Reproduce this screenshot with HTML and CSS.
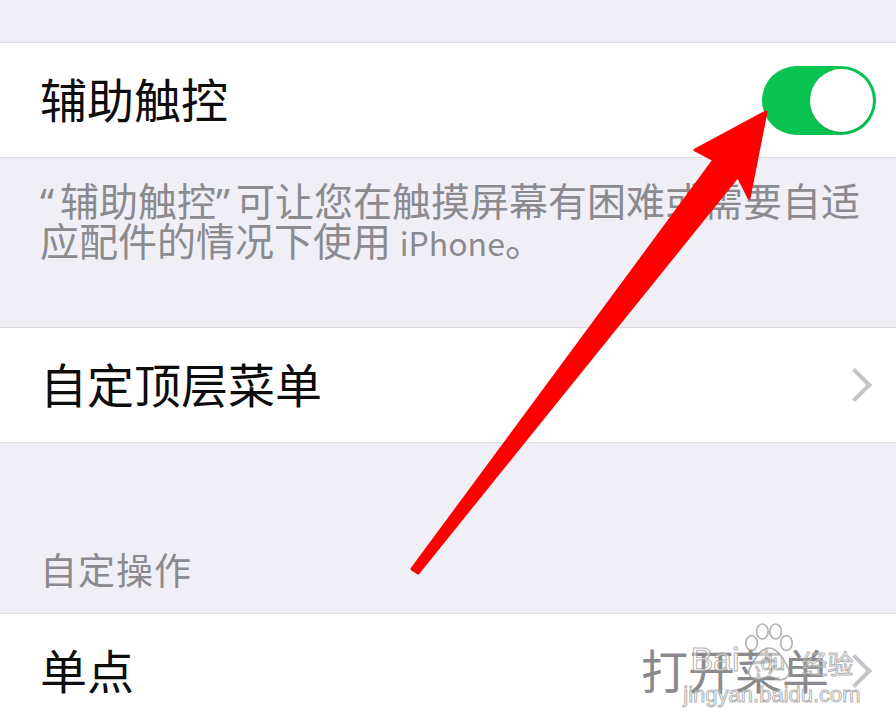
FILE: index.html
```html
<!DOCTYPE html>
<html lang="zh-CN">
<head>
  <meta charset="UTF-8">
  <title>辅助触控</title>
  <link rel="stylesheet" href="styles.css">
</head>
<body>

  <div class="screen">
    <div class="top-gap"></div>

    <div class="group">
      <div class="cell">
        <span class="label">辅助触控</span>
        <span class="switch on"><span class="knob"></span></span>
      </div>
    </div>

    <p class="footer"><span class="q">“</span>辅助触控<span class="q">”</span>可让您在触摸屏幕有困难或需要自适<br>应配件的情况下使用 <span class="latin">iPhone</span>。</p>

    <div class="group">
      <div class="cell">
        <span class="label">自定顶层菜单</span>
        <span class="chevron"></span>
      </div>
    </div>

    <p class="header">自定操作</p>

    <div class="group">
      <div class="cell">
        <span class="label">单点</span>
        <span class="value">打开菜单</span>
        <span class="chevron"></span>
      </div>
    </div>

    <!-- red annotation arrow drawn over the page -->
    <svg class="arrow" width="896" height="724" viewBox="0 0 896 724">
      <polygon points="766,112 749,198 738,176 418,573 412,569 714,160 695,150"
               fill="#ff0000" stroke="#ff0000" stroke-width="3" stroke-linejoin="round"/>
    </svg>

    <!-- watermark -->
    <div class="watermark">
      <div class="wm-logo">
        <span class="wm-bai">Bai</span>
        <svg class="wm-paw" width="70" height="72" viewBox="0 0 70 72">
          <ellipse cx="14" cy="24" rx="7" ry="9" />
          <ellipse cx="27" cy="10" rx="7" ry="9" />
          <ellipse cx="43" cy="10" rx="7" ry="9" />
          <ellipse cx="56" cy="24" rx="7" ry="9" />
          <path d="M35 30 C24 30 16 46 12 54 C8 62 14 70 24 68 C30 67 32 64 35 64 C38 64 40 67 46 68 C56 70 62 62 58 54 C54 46 46 30 35 30 Z" />
        </svg>
        <span class="wm-du">du</span>
        <span class="wm-jy">经验</span>
      </div>
      <div class="wm-url">jingyan.baidu.com</div>
    </div>
  </div>

</body>
</html>
```

FILE: styles.css
```css
body {
  margin: 0;
  background-color: #f0eff5;
  font-family: "Noto Sans CJK SC", "Noto Sans", sans-serif;
}

.screen {
  position: relative;
  width: 896px;
  height: 724px;
  overflow: hidden;
}

.top-gap {
  height: 42px;
}

.group {
  background-color: #ffffff;
  border-top: 1px solid #dcdce0;
  border-bottom: 1px solid #dcdce0;
}

.cell {
  display: flex;
  align-items: center;
  height: 114px;
  padding: 0 20px 0 40px;
}

.label {
  flex: 1;
  font-size: 47px;
  color: #0d0d0d;
  line-height: 1;
  padding-bottom: 5px;
}

.value {
  font-size: 47px;
  color: #8a8a8e;
  line-height: 1;
  padding-bottom: 5px;
  margin-right: 14px;
}

.chevron {
  width: 20px;
  height: 20px;
  border-top: 4px solid #c4c4c9;
  border-right: 4px solid #c4c4c9;
  transform: rotate(45deg);
  margin-right: 9px;
}

.switch {
  width: 114px;
  height: 69px;
  border-radius: 35px;
  background-color: #0ac452;
  display: flex;
  align-items: center;
  justify-content: flex-end;
  padding: 0 3px;
  box-sizing: border-box;
}

.knob {
  width: 63px;
  height: 63px;
  border-radius: 50%;
  background-color: #ffffff;
  box-shadow: 0 1px 3px rgba(0, 0, 0, 0.15);
}

.footer {
  margin: 0;
  padding: 21px 0 68px 40px;
  font-size: 39px;
  line-height: 40px;
  color: #8a8a8f;
  white-space: nowrap;
}

.footer .q {
  font-family: "Noto Sans", sans-serif;
  line-height: 20px;
  display: inline-block;
  width: 20px;
}

.footer .latin {
  font-size: 32px;
  line-height: 20px;
}

.header {
  margin: 0;
  padding: 106px 40px 24px;
  font-size: 37px;
  letter-spacing: 1px;
  line-height: 40px;
  color: #8a8a8f;
}

.arrow {
  position: absolute;
  top: 0;
  left: 0;
}

.watermark {
  position: absolute;
  left: 684px;
  top: 620px;
  width: 176px;
  display: flex;
  flex-direction: column;
  align-items: center;
  opacity: 0.75;
}

.wm-logo {
  display: flex;
  align-items: flex-end;
  position: relative;
  height: 64px;
}

.wm-bai,
.wm-du,
.wm-jy,
.wm-url {
  font-family: "Liberation Sans", Arial, sans-serif;
  color: rgba(255, 255, 255, 0.7);
  -webkit-text-stroke: 1px #9a9a9a;
  line-height: 1;
}

.wm-bai {
  font-size: 34px;
  margin-bottom: 8px;
}

.wm-paw {
  width: 58px;
  height: 62px;
  fill: rgba(255, 255, 255, 0.7);
  stroke: #9a9a9a;
  stroke-width: 2;
}

.wm-du {
  position: absolute;
  left: 70px;
  bottom: 10px;
  font-size: 22px;
}

.wm-jy {
  font-family: "Noto Sans CJK SC", sans-serif;
  font-size: 26px;
  margin-bottom: 8px;
  margin-left: 4px;
}

.wm-url {
  font-size: 22px;
  margin-top: 0;
}
```
